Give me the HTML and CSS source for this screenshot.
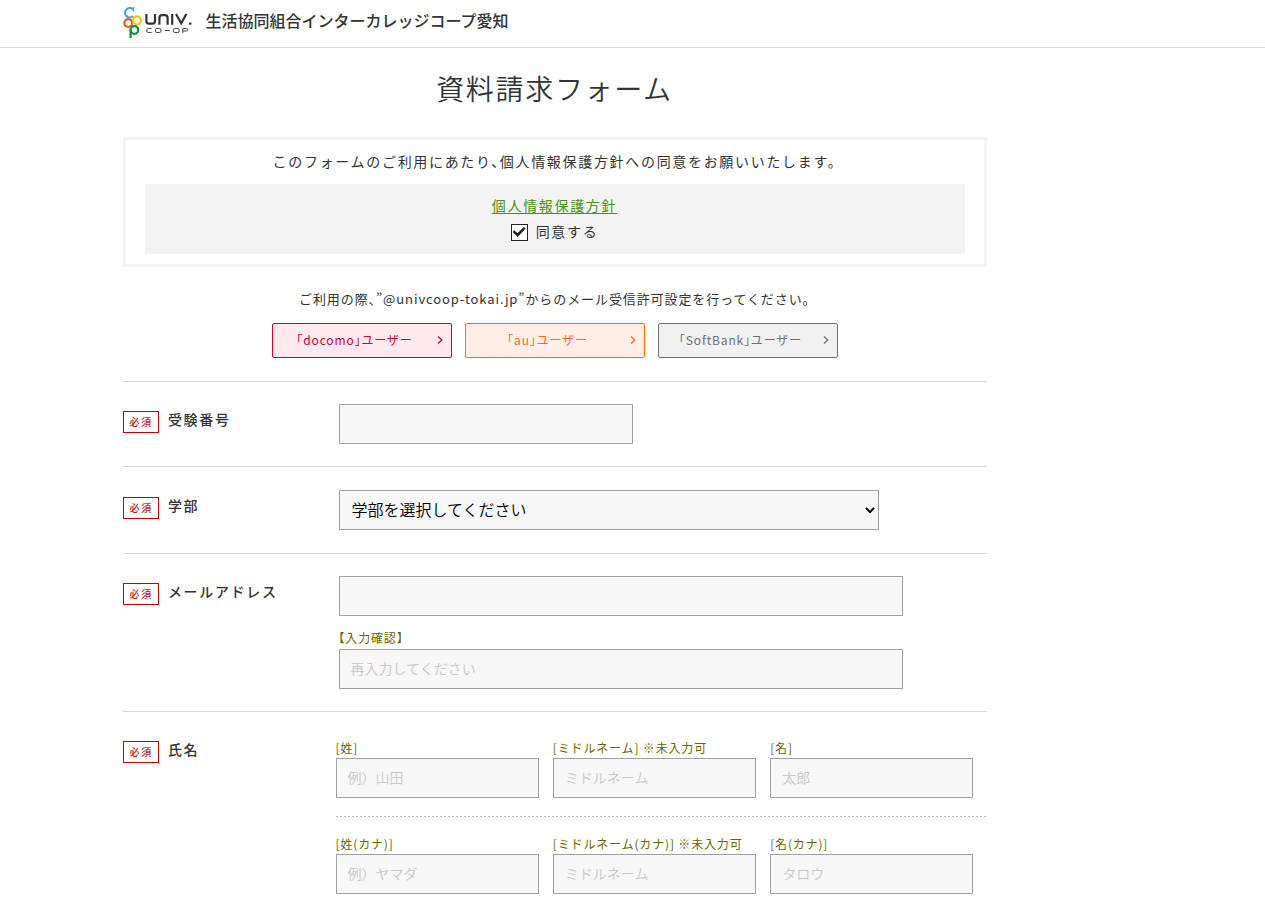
FILE: index.html
```html
<!DOCTYPE html>
<html lang="ja">
<head>
<meta charset="utf-8">
<meta name="viewport" content="width=device-width, initial-scale=1">
<title>資料請求フォーム</title>
<link rel="stylesheet" href="styles.css">
</head>
<body>
<header class="site-header">
  <div class="container brand">
    <svg class="logo" viewBox="0 0 70 32" role="img" aria-label="UNIV. CO-OP">
      <g fill="none" stroke-width="2.2">
        <path d="M9.8 3.4A4.6 4.6 0 1 0 10 10" stroke="#4aa5d3"/>
        <path d="M10.4 5.6V1" stroke="#4aa5d3" stroke-width="1.6"/>
        <circle cx="5.2" cy="17" r="3.9" stroke="#f15a29"/>
        <circle cx="14" cy="14.4" r="4" stroke="#fbc400"/>
        <circle cx="11.4" cy="24" r="3.8" stroke="#0b8f3f"/>
        <path d="M7.6 23.8V32" stroke="#0b8f3f"/>
      </g>
      <g fill="none" stroke="#333" stroke-width="2.2">
        <path d="M23.4 8V15Q23.4 17.7 26 17.7H29.4Q32 17.7 32 15V8"/>
        <path d="M36.4 18.8V12Q36.4 9.2 39 9.2H42Q44.6 9.2 44.6 12V18.8"/>
        <path d="M49.2 8V18.8"/>
        <path d="M53 8L58.2 17.2L63.4 8"/>
        <path d="M66 17.6H68.4"/>
      </g>
      <g fill="none" stroke="#444" stroke-width="1">
        <path d="M28.6 22.5H25.4Q23.8 22.5 23.8 24V25.2Q23.8 26.5 25.4 26.5H28.6"/>
        <rect x="32.5" y="22.5" width="5.4" height="4" rx="1.3"/>
        <path d="M42 24.5H46.8"/>
        <rect x="50.5" y="22.5" width="5.6" height="4" rx="1.3"/>
        <path d="M59.8 27V22.5H63.6Q64.8 22.5 64.8 23.7Q64.8 25 63.6 25H59.8"/>
      </g>
    </svg>
    <span class="brand-name">生活協同組合インターカレッジコープ愛知</span>
  </div>
</header>
<main class="container">
  <form class="request-form">
    <h1 class="page-title">資料請求フォーム</h1>

    <section class="consent">
      <p class="consent-lead">このフォームのご利用にあたり、個人情報保護方針への同意をお願いいたします。</p>
      <div class="consent-panel">
        <a class="policy-link" href="#">個人情報保護方針</a>
        <label class="agree"><input class="agree-box" type="checkbox" checked>同意する</label>
      </div>
    </section>

    <section class="carriers">
      <p class="carrier-note">ご利用の際、”@univcoop-tokai.jp”からのメール受信許可設定を行ってください。</p>
      <div class="carrier-list">
        <a class="carrier carrier-docomo" href="#">「docomo」ユーザー<svg class="chevron" viewBox="0 0 6 8"><path d="M1 0.5L4.8 4L1 7.5"/></svg></a>
        <a class="carrier carrier-au" href="#">「au」ユーザー<svg class="chevron" viewBox="0 0 6 8"><path d="M1 0.5L4.8 4L1 7.5"/></svg></a>
        <a class="carrier carrier-softbank" href="#">「SoftBank」ユーザー<svg class="chevron" viewBox="0 0 6 8"><path d="M1 0.5L4.8 4L1 7.5"/></svg></a>
      </div>
    </section>

    <div class="row">
      <div class="row-head"><span class="required">必須</span><label class="row-label" for="exam">受験番号</label></div>
      <div class="row-body"><input class="field field-short" id="exam" type="text"></div>
    </div>
    <div class="row row-select">
      <div class="row-head"><span class="required">必須</span><label class="row-label" for="faculty">学部</label></div>
      <div class="row-body"><select class="field field-select" id="faculty"><option>学部を選択してください</option></select></div>
    </div>
    <div class="row">
      <div class="row-head"><span class="required">必須</span><label class="row-label" for="mail">メールアドレス</label></div>
      <div class="row-body">
        <input class="field field-long" id="mail" type="email">
        <label class="hint hint-confirm" for="mail2">【入力確認】</label>
        <input class="field field-long" id="mail2" type="email" placeholder="再入力してください">
      </div>
    </div>
    <div class="row">
      <div class="row-head"><span class="required">必須</span><span class="row-label">氏名</span></div>
      <div class="names">
        <div class="name-group">
          <div class="name-cell"><label class="hint" for="sei">[姓]</label><input class="field" id="sei" type="text" placeholder="例）山田"></div>
          <div class="name-cell"><label class="hint" for="middle">[ミドルネーム] ※未入力可</label><input class="field" id="middle" type="text" placeholder="ミドルネーム"></div>
          <div class="name-cell"><label class="hint" for="mei">[名]</label><input class="field" id="mei" type="text" placeholder="太郎"></div>
        </div>
        <div class="name-group name-group-kana">
          <div class="name-cell"><label class="hint" for="sei-kana">[姓(カナ)]</label><input class="field" id="sei-kana" type="text" placeholder="例）ヤマダ"></div>
          <div class="name-cell"><label class="hint" for="middle-kana">[ミドルネーム(カナ)] ※未入力可</label><input class="field" id="middle-kana" type="text" placeholder="ミドルネーム"></div>
          <div class="name-cell"><label class="hint" for="mei-kana">[名(カナ)]</label><input class="field" id="mei-kana" type="text" placeholder="タロウ"></div>
        </div>
      </div>
    </div>
  </form>
</main>
</body>
</html>
```
FILE: styles.css
```css
* { box-sizing: border-box; }

body {
  margin: 0;
  color: #333;
  background: #fff;
  font-family: "Noto Sans CJK JP", sans-serif;
  font-size: 14px;
  line-height: 26px;
}

p, h1 { margin: 0; }

.container {
  max-width: 1020px;
  margin: 0 auto;
}

.site-header { border-bottom: 1px solid #ddd; }

.brand {
  display: flex;
  align-items: center;
  gap: 13px;
  padding: 6px 0 9px;
}

.logo { width: 70px; height: 32px; }

.brand-name {
  padding-bottom: 4px;
  font-size: 16px;
  font-weight: 500;
}

.request-form {
  max-width: 864px;
  letter-spacing: 0.12em;
  font-feature-settings: "halt";
}

.page-title {
  padding: 18px 0 27px;
  font-size: 28px;
  font-weight: 350;
  line-height: 44px;
  text-align: center;
}

.consent {
  padding: 8px 19px 10px;
  border: 3px solid #f3f3f3;
  text-align: center;
}

.consent-panel {
  display: flex;
  flex-direction: column;
  align-items: center;
  margin-top: 10px;
  padding: 8px 0 10px;
  background: #f3f3f3;
}

.policy-link { color: #4b9210; text-underline-offset: 2px; }

.agree {
  display: flex;
  align-items: center;
  gap: 8px;
}

.agree-box {
  appearance: none;
  display: grid;
  place-items: center;
  width: 17px;
  height: 17px;
  margin: 2px 0 0;
  border: 1px solid #222;
  background: #fff;
}

.agree-box:checked::before {
  content: "";
  width: 13px;
  height: 10px;
  background: #222;
  clip-path: polygon(0 50%, 12% 32%, 38% 62%, 86% 0, 100% 16%, 39% 100%);
}

.carriers { padding: 19px 0 23px; }

.carrier-note {
  font-size: 13px;
  letter-spacing: 0.07em;
  text-align: center;
}

.carrier-list {
  display: flex;
  justify-content: center;
  gap: 13px;
  margin-top: 11px;
}

.carrier {
  display: grid;
  grid-template-columns: 1fr 14px;
  align-items: center;
  width: 180px;
  height: 35px;
  padding-bottom: 1px;
  border: 1px solid;
  border-radius: 2px;
  font-size: 12px;
  letter-spacing: 0.07em;
  text-align: center;
  text-decoration: none;
}

.carrier-docomo { color: #cc0033; background: #ffe9ef; }
.carrier-au { color: #ff6a13; background: #ffeee5; }
.carrier-softbank { color: #6d6f70; background: #f1f1f1; }

.chevron {
  width: 6px;
  height: 8px;
  fill: none;
  stroke: currentColor;
  stroke-width: 1.3;
}

.row {
  display: grid;
  grid-template-columns: 213px 1fr;
  padding: 22px 0;
  border-top: 1px solid #d8d8d8;
}

.row-select { padding: 23px 0; }

.row-head {
  display: flex;
  align-items: flex-start;
  gap: 9px;
  padding-top: 3px;
}

.required {
  margin-top: 4px;
  padding: 0 5px 0 6px;
  border: 1px solid #c00000;
  color: #b81c22;
  font-size: 10px;
  font-weight: 500;
  line-height: 20px;
}

.row-label {
  font-weight: 500;
  line-height: 24px;
}

.row-body {
  display: flex;
  flex-direction: column;
  align-items: flex-start;
  padding-left: 3px;
}

.field {
  width: 100%;
  height: 40px;
  padding: 0 11px 3px;
  border: 1px solid #a0a0a0;
  border-radius: 0;
  color: #000;
  background: #f7f7f7;
  font-family: inherit;
  font-size: 14px;
  font-weight: 350;
  letter-spacing: normal;
  font-feature-settings: normal;
}

.field::placeholder { color: #c8c8c8; opacity: 1; }
.field-short { max-width: 294px; }
.field-long { max-width: 564px; }

.field-select {
  max-width: 540px;
  padding: 0 0 3px 8px;
  font-size: 16px;
}

.hint {
  color: #666600;
  font-size: 12px;
  letter-spacing: 0.07em;
  line-height: 20px;
}

.hint-confirm { padding-top: 12px; padding-bottom: 1px; }

.names { padding-top: 4px; }

.name-group {
  display: grid;
  grid-template-columns: repeat(3, 1fr);
  gap: 14px;
  padding-right: 13px;
}

.name-group-kana {
  margin-top: 18px;
  padding-top: 18px;
  background: repeating-linear-gradient(90deg, #bbb 0 2px, transparent 2px 4px) top / 100% 1px no-repeat;
}

.name-cell {
  display: flex;
  flex-direction: column;
}
```
